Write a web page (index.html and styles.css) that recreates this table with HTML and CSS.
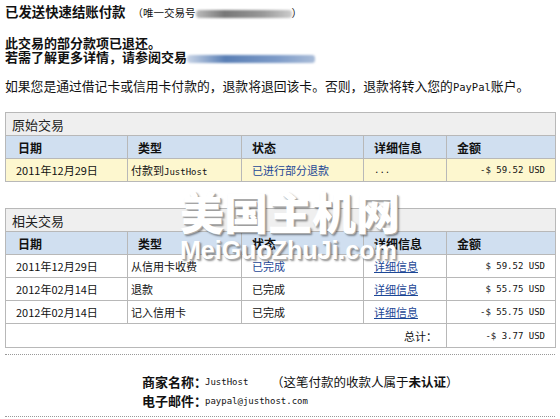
FILE: index.html
```html
<!DOCTYPE html>
<html lang="zh-CN">
<head>
<meta charset="utf-8">
<link rel="stylesheet" href="styles.css">
</head>
<body>
<div class="page">
  <h1 class="title">已发送快速结账付款 <span class="txn">（唯一交易号<span class="blur-gray"></span>）</span></h1>
  <div class="notice">
    <div>此交易的部分款项已退还。</div>
    <div>若需了解更多详情，请参阅交易<span class="blur-blue"></span></div>
  </div>
  <p class="info">如果您是通过借记卡或信用卡付款的，退款将退回该卡。否则，退款将转入您的<span class="mono">PayPal</span>账户。</p>

  <table class="grid first">
    <colgroup><col class="c1"><col class="c2"><col class="c3"><col class="c4"><col class="c5"></colgroup>
    <tr class="cap"><th colspan="5">原始交易</th></tr>
    <tr class="head"><th class="h1st">日期</th><th>类型</th><th>状态</th><th>详细信息</th><th>金额</th></tr>
    <tr class="yellow">
      <td>2011年12月29日</td><td class="type">付款到<span class="mono">JustHost</span></td><td><span class="link">已进行部分退款</span></td><td class="mono">...</td><td class="amt mono">-$ 59.52 USD</td>
    </tr>
  </table>

  <table class="grid second">
    <colgroup><col class="c1"><col class="c2"><col class="c3"><col class="c4"><col class="c5"></colgroup>
    <tr class="cap"><th colspan="5">相关交易</th></tr>
    <tr class="head"><th class="h1st">日期</th><th>类型</th><th>状态</th><th>详细信息</th><th>金额</th></tr>
    <tr><td>2011年12月29日</td><td class="type">从信用卡收费</td><td><span class="link">已完成</span></td><td><span class="link u">详细信息</span></td><td class="amt mono">$ 59.52 USD</td></tr>
    <tr><td>2012年02月14日</td><td class="type">退款</td><td>已完成</td><td><span class="link u">详细信息</span></td><td class="amt mono">$ 55.75 USD</td></tr>
    <tr><td>2012年02月14日</td><td class="type">记入信用卡</td><td>已完成</td><td><span class="link u">详细信息</span></td><td class="amt mono">-$ 55.75 USD</td></tr>
    <tr class="total"><td colspan="4" class="total-label">总计：</td><td class="amt mono">-$ 3.77 USD</td></tr>
  </table>

  <div class="merchant">
    <div class="mrow"><span class="mlabel">商家名称：</span><span class="mval mono">JustHost</span><span class="mnote">（这笔付款的收款人属于<b>未认证</b>）</span></div>
    <div class="mrow"><span class="mlabel">电子邮件：</span><span class="mval mono">paypal@justhost.com</span></div>
  </div>
</div>

<div class="watermark">
  <div class="wm-cn">美国主机网</div>
  <div class="wm-en">MeiGuoZhuJi.com</div>
</div>
</body>
</html>
```

FILE: styles.css
```css
html, body {
  margin: 0;
  padding: 0;
  background: #fff;
}
body {
  font-family: "Noto Sans CJK SC", "Noto Sans", sans-serif;
  color: #111;
  width: 560px;
  height: 419px;
  overflow: hidden;
  position: relative;
}
.page {
  padding: 3px 5px 0 5px;
}
.mono {
  font-family: "DejaVu Sans Mono", "Liberation Mono", monospace;
  font-size: 9px;
}
.title {
  margin: 0;
  font-size: 13.4px;
  line-height: 16px;
  font-weight: bold;
  white-space: nowrap;
}
.txn {
  font-size: 10.5px;
  font-weight: normal;
  margin-left: 4px;
}
.blur-gray {
  display: inline-block;
  width: 96px;
  height: 8px;
  vertical-align: -1px;
  background: linear-gradient(90deg, #bbb, #777 30%, #999 70%, #ccc);
  filter: blur(1.3px);
  border-radius: 3px;
}
.notice {
  margin-top: 15px;
  font-size: 13px;
  font-weight: bold;
  line-height: 14px;
}
.blur-blue {
  display: inline-block;
  width: 128px;
  height: 8px;
  vertical-align: -1px;
  background: linear-gradient(90deg, #c8d4e6, #5a7fb5 30%, #7d9bc8 70%, #a9bcd8);
  filter: blur(1.3px);
  border-radius: 3px;
}
.info {
  margin: 14px 0 0 0;
  font-size: 12.8px;
  line-height: 16px;
  white-space: nowrap;
}
.info .mono {
  font-size: 10.5px;
}

.grid {
  width: 550px;
  border-collapse: collapse;
  table-layout: fixed;
  font-size: 11px;
}
.grid.first { margin-top: 17px; }
.grid.second { margin-top: 26px; }
.grid col.c1 { width: 122px; }
.grid col.c2 { width: 114px; }
.grid col.c3 { width: 122px; }
.grid col.c4 { width: 83px; }
.grid col.c5 { width: 109px; }
.grid th, .grid td {
  border: 1px solid #b8b8b8;
  height: 22px;
  padding: 0 10px;
  white-space: nowrap;
  text-align: left;
  vertical-align: middle;
}
.grid .cap th {
  background: #efefef;
  font-weight: normal;
  font-size: 13px;
  padding-left: 6px;
  color: #222;
}
.grid .head th {
  background: #d0dff0;
  font-weight: bold;
  font-size: 12px;
}
.grid .head th.h1st {
  padding-left: 12px;
}
.grid .yellow td {
  background: #fdf7cf;
}
.grid td.type {
  padding-left: 3px;
}
.grid td.amt {
  text-align: right;
}
.link {
  color: #1d4796;
}
.link.u {
  text-decoration: underline;
}
.grid .total td {
  height: 23px;
}
.grid .total td.total-label {
  text-align: right;
  padding-right: 9px;
}

.merchant {
  margin-top: 6px;
  border-top: 1px dotted #999;
  border-bottom: 1px dotted #999;
  padding: 17px 0 6px 137px;
}
.mrow {
  display: flex;
  align-items: center;
  height: 19px;
  white-space: nowrap;
}
.mlabel {
  font-size: 13px;
  font-weight: bold;
  width: 63px;
}
.mval {
  width: 66px;
}
.mnote {
  font-size: 12.5px;
}

.watermark {
  position: absolute;
  left: 180px;
  top: 189px;
  color: #fff;
  pointer-events: none;
}
.wm-cn {
  font-family: "Noto Sans CJK SC", sans-serif;
  font-weight: 900;
  font-size: 44px;
  line-height: 44px;
  text-shadow: 1px 1px 0 #aaa, 2px 2px 2px rgba(0,0,0,0.45);
}
.wm-en {
  font-family: "Liberation Sans", Arial, sans-serif;
  font-weight: bold;
  font-size: 25px;
  line-height: 25px;
  margin-top: 5px;
  text-shadow: 1px 1px 0 #aaa, 2px 2px 2px rgba(0,0,0,0.45);
}
```
